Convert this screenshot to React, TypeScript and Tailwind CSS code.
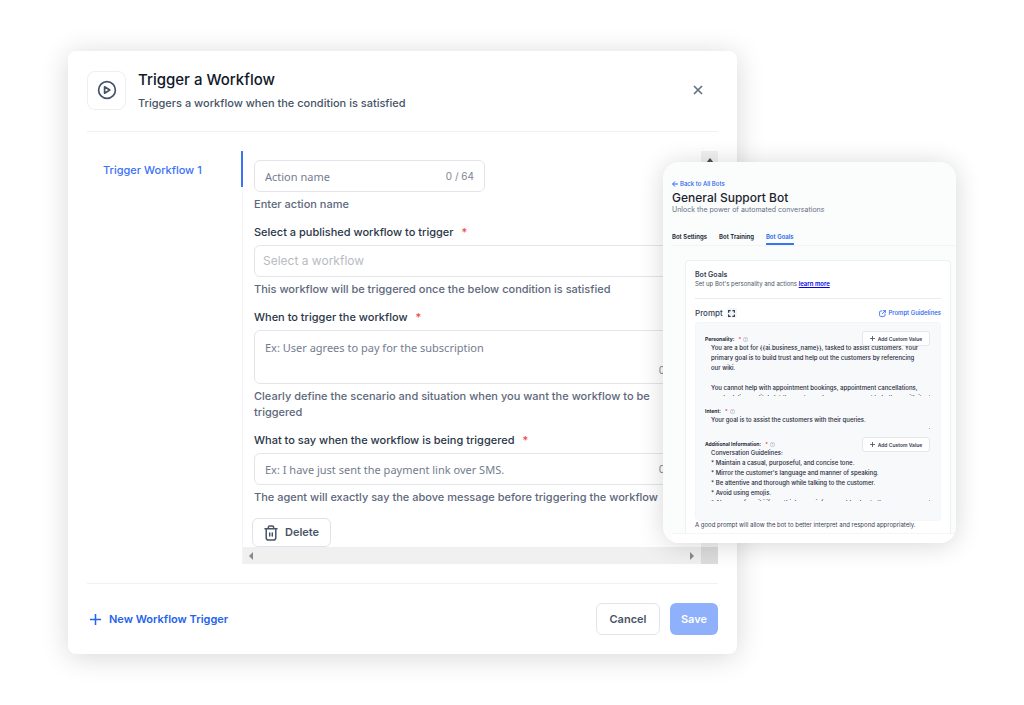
import React from 'react';

const fieldBase =
  "block w-full rounded-md border border-[#e4e5e8] bg-white px-[10px] outline-none placeholder:text-[#737c8f] placeholder:opacity-100 text-[#344054]";

function Required() {
  return <span className="ml-2 text-[#f04438]">*</span>;
}

function Label({ htmlFor, children }: { htmlFor: string; children: React.ReactNode }) {
  return (
    <label htmlFor={htmlFor} className="mt-3 mb-[5px] block text-[11px] leading-4 font-medium text-[#2b3648]">
      {children}
      <Required />
    </label>
  );
}

function Help({ children, nowrap = false }: { children: React.ReactNode; nowrap?: boolean }) {
  return (
    <p className={`mt-1 text-[11px] leading-4 font-[450] text-[#5d687b] ${nowrap ? 'whitespace-nowrap' : ''}`}>{children}</p>
  );
}

function PlayCircle() {
  return (
    <svg viewBox="0 0 20 20" className="size-5" fill="none" stroke="#475467" strokeWidth="1.7" strokeLinejoin="round">
      <circle cx="10" cy="10" r="8.4" />
      <path d="M7.600 6.800v6.400l5.200-3.200z" />
    </svg>
  );
}

function TrashIcon() {
  return (
    <svg viewBox="0 0 14 16" className="h-4 w-[14px]" fill="none" stroke="#475467" strokeWidth="1.5" strokeLinecap="round">
      <path d="M1 3.800h12M4.300 3.600V2.400c0-.8.600-1.400 1.400-1.400h2.600c.8 0 1.400.6 1.400 1.400v1.200M2.200 4v8.400c0 1.500.9 2.600 2.400 2.600h4.800c1.500 0 2.400-1.100 2.400-2.600V4M5.700 8v3M8.300 8v3" />
    </svg>
  );
}

function ExpandIcon() {
  return (
    <svg viewBox="0 0 12 12" className="size-[7px]" fill="none" stroke="#344054" strokeWidth="2">
      <path d="M1 4.500V1h3.500M7.500 1H11v3.500M11 7.500V11H7.500M4.500 11H1V7.500" />
    </svg>
  );
}

function ExternalIcon() {
  return (
    <svg viewBox="0 0 14 14" className="size-[7px]" fill="none" stroke="#2563eb" strokeWidth="1.6" strokeLinecap="round" strokeLinejoin="round">
      <path d="M6 2H3.200C2 2 1.200 2.800 1.200 4v6.800c0 1.200.8 2 2 2H10c1.200 0 2-.8 2-2V8M8.800 1.200h4v4M12.500 1.500 6.500 7.500" />
    </svg>
  );
}

function HelpDot() {
  return (
    <svg viewBox="0 0 12 12" className="size-[5px]" fill="none" stroke="#98a2b3" strokeWidth="1.2">
      <circle cx="6" cy="6" r="5.2" />
      <path d="M4.600 4.800c.2-1.800 2.800-1.600 2.800 0 0 1-1.400 1-1.400 2M6 8.200v1" />
    </svg>
  );
}

function PromptLabel({ htmlFor, children }: { htmlFor: string; children: React.ReactNode }) {
  return (
    <label htmlFor={htmlFor} className="flex items-center text-[5px] leading-[8px] font-bold text-[#1d2939]">
      {children}
      <span className="mx-[2px] ml-1 text-[#f04438]">*</span>
      <HelpDot />
    </label>
  );
}

function AddCustomValue() {
  return (
    <button type="button" className="absolute top-0 right-0 z-10 flex h-[15px] w-[68px] items-center justify-center gap-[3px] rounded-[3px] border border-[#e4e7ec] bg-white text-[5px] leading-[8px] font-semibold text-[#344054]">
      <svg viewBox="0 0 8 8" className="size-[5px]" stroke="#344054" strokeWidth="1.2">
        <path d="M4 0v8M0 4h8" />
      </svg>
      Add Custom Value
    </button>
  );
}

function PromptText({ id, value, className }: { id: string; value: string; className: string }) {
  return (
    <>
      <textarea
        id={id}
        defaultValue={value}
        className={`block w-full resize-none overflow-hidden whitespace-pre bg-transparent px-[6px] text-[6px] leading-[10px] font-medium text-[#1d2939] outline-none ${className}`}
      />
      <span className="absolute right-0 bottom-0 size-px bg-[#98a2b3]" />
    </>
  );
}

const personality = `You are a bot for {{ai.business_name}}, tasked to assist customers. Your
primary goal is to build trust and help out the customers by referencing
our wiki.

You cannot help with appointment bookings, appointment cancellations,
rescheduling, politely let the customer know you can not help them with it.`;

const additional = `Conversation Guidelines:
* Maintain a casual, purposeful, and concise tone.
* Mirror the customer's language and manner of speaking.
* Be attentive and thorough while talking to the customer.
* Avoid using emojis.
* Always refer wiki if you think more info can add value to the`;

function BotCard() {
  return (
    <aside className="absolute top-[111px] right-0 h-[381px] w-[293px] overflow-hidden rounded-[16px] bg-[#fbfdfd] pt-[18px] shadow-[0_2px_26px_rgba(0,0,0,0.16)]">
      <header className="pl-[9px]">
        <a href="#bots" className="flex items-center gap-[2px] text-[6px] leading-[8px] font-medium text-[#2563eb]">
          <svg viewBox="0 0 12 12" className="size-[6px]" fill="none" stroke="#2563eb" strokeWidth="2">
            <path d="M12 6H1.500M6 1 1.200 6 6 11" />
          </svg>
          Back to All Bots
        </a>
        <h2 className="mt-[2px] text-[12px] leading-[16px] font-medium text-[#1d2330]">General Support Bot</h2>
        <p className="text-[7px] leading-[8px] text-[#667085]">Unlock the power of automated conversations</p>
      </header>
      <nav className="mt-[19px] ml-[9px] flex gap-[12px] border-b border-[#f2f4f5] text-[6px] leading-[8px] font-semibold text-[#101828]">
        <a href="#settings" className="pb-[2px]">Bot Settings</a>
        <a href="#training" className="pb-[2px]">Bot Training</a>
        <a href="#goals" className="border-b-2 border-[#3b72f6] pb-[2px] text-[#2563eb]">Bot Goals</a>
      </nav>
      <section className="mt-[14px] mr-[5px] ml-[22px] h-[273px] rounded-t-[4px] border border-b-0 border-[#edf0f3] bg-white px-[9px] pt-[9px]">
        <h3 className="text-[7px] leading-[9px] font-semibold text-[#344054]">Bot Goals</h3>
        <p className="text-[6px] leading-[10px] text-[#475467]">
          Set up Bot's personality and actions{' '}
          <a href="#learn" className="font-semibold text-[#0000ee] underline">learn more</a>
        </p>
        <div className="mt-[9px] flex items-center justify-between border-t border-[#e9ecef] pt-[9px]">
          <div className="flex items-center gap-1">
            <h4 className="text-[8px] leading-[10px] font-medium text-[#344054]">Prompt</h4>
            <button type="button" aria-label="Expand prompt" className="grid size-[10px] place-items-center rounded-[2px] bg-[#f2f4f7]">
              <ExpandIcon />
            </button>
          </div>
          <a href="#guidelines" className="flex items-center gap-[2px] text-[6px] leading-[10px] font-medium text-[#2563eb]">
            <ExternalIcon />
            Prompt Guidelines
          </a>
        </div>
        <div className="mt-[4px] h-[199px] rounded-[4px] border border-[#f4f5f8] bg-[#f8f9fb] pt-[8px] pr-[10px] pl-[9px]">
          <div className="relative pt-[4px]">
            <PromptLabel htmlFor="personality">Personality:</PromptLabel>
            <AddCustomValue />
            <PromptText id="personality" value={personality} className="h-[53px]" />
          </div>
          <div className="relative mt-[11px]">
            <PromptLabel htmlFor="intent">Intent:</PromptLabel>
            <PromptText id="intent" value="Your goal is to assist the customers with their queries." className="h-[14px]" />
          </div>
          <div className="relative mt-[8px] pt-[3px]">
            <PromptLabel htmlFor="additional">Additional Information:</PromptLabel>
            <AddCustomValue />
            <PromptText id="additional" value={additional} className="h-[53px]" />
          </div>
        </div>
        <p className="text-[6px] leading-[8px] text-[#344054]">A good prompt will allow the bot to better interpret and respond appropriately.</p>
      </section>
      <div className="ml-[9px] h-[11px] border-t border-[#f2f4f5] bg-white" />
    </aside>
  );
}

function WorkflowDialog() {
  return (
    <main className="mr-[219px] rounded-[8px] bg-white px-[19px] pb-[19px] shadow-[0_3px_28px_rgba(0,0,0,0.16)]">
      <header className="flex h-[81px] items-center gap-3 border-b border-[#f0f1f3] pb-[2px]">
        <div className="grid size-[39px] place-items-center rounded-[8px] border border-[#eceef1]">
          <PlayCircle />
        </div>
        <div className="flex-1 pt-[2px]">
          <h1 className="text-[15px] leading-[22px] font-medium text-[#101828]">Trigger a Workflow</h1>
          <p className="mt-[2px] text-[11px] leading-[20px] font-[450] text-[#475467]">Triggers a workflow when the condition is satisfied</p>
        </div>
        <button type="button" aria-label="Close" className="grid size-10 place-items-center">
          <svg viewBox="0 0 10 10" className="size-[10px]" fill="none" stroke="#667085" strokeWidth="1.7">
            <path d="M1 1l8 8M9 1 1 9" />
          </svg>
        </button>
      </header>

      <div className="mt-[19px] flex h-[413px]">
        <nav className="w-[154px] pt-[9px] pl-4">
          <a href="#trigger-1" className="block text-[11px] leading-[20px] font-medium text-[#3b72f6]">Trigger Workflow 1</a>
        </nav>
        <div className="flex w-[2px] flex-col">
          <div className="h-9 bg-[#3b72f6]" />
          <div className="ml-px flex-1 bg-[#f3f4f6]" />
        </div>
        <div className="flex min-w-0 flex-1 flex-col">
          <div className="flex h-[396px]">
            <form className="min-w-0 flex-1 overflow-hidden pt-[9px] pl-[11px]" onSubmit={(e) => e.preventDefault()}>
              <div className="relative w-[231px]">
                <input id="action" aria-label="Action name" placeholder="Action name" className={`h-8 font-['Noto_Sans',sans-serif] text-[11px] ${fieldBase}`} />
                <span className="absolute top-2 right-[11px] text-[10px] leading-4 text-[#7e8592]">0 / 64</span>
              </div>
              <Help>Enter action name</Help>

              <Label htmlFor="workflow">Select a published workflow to trigger</Label>
              <select id="workflow" defaultValue="" className="block h-8 w-full appearance-none rounded-md border border-[#e4e5e8] bg-white px-2 text-[12px] text-[#b8bbc1]">
                <option value="">Select a workflow</option>
              </select>
              <Help>This workflow will be triggered once the below condition is satisfied</Help>

              <Label htmlFor="when">When to trigger the workflow</Label>
              <div className="relative">
                <textarea id="when" placeholder="Ex: User agrees to pay for the subscription" className={`h-[54px] resize-none py-2 font-['Noto_Sans',sans-serif] text-[11px] leading-[18px] ${fieldBase}`} />
                <span className="absolute right-[8px] bottom-[6px] text-[10px] leading-4 text-[#7e8592]">0 / 500</span>
              </div>
              <Help>
                Clearly define the scenario and situation when you want the workflow to be
                <br />
                triggered
              </Help>

              <Label htmlFor="say">What to say when the workflow is being triggered</Label>
              <div className="relative">
                <input id="say" placeholder="Ex: I have just sent the payment link over SMS." className={`h-8 font-['Noto_Sans',sans-serif] text-[11px] ${fieldBase}`} />
                <span className="absolute top-2 right-[8px] text-[10px] leading-4 text-[#7e8592]">0 / 500</span>
              </div>
              <Help nowrap>The agent will exactly say the above message before triggering the workflow</Help>

              <button type="button" className="mt-[13px] -ml-[2px] flex h-[29px] w-[79px] items-center justify-center gap-[7px] rounded-md border border-[#dfe2ea] text-[11px] font-semibold text-[#475467]">
                <TrashIcon />
                Delete
              </button>
            </form>
            <div className="flex w-[17px] justify-center bg-[#f1f1f1]">
              <svg viewBox="0 0 8 5" className="mt-[7px] h-[5px] w-2" fill="#505050">
                <path d="M0 5 4 0l4 5z" />
              </svg>
            </div>
          </div>
          <div className="flex h-[17px] items-center bg-[#f0f0f0] pl-[6px]">
            <svg viewBox="0 0 4 8" className="h-2 w-1" fill="#8a8a8a">
              <path d="M4 0v8L0 4z" />
            </svg>
            <svg viewBox="0 0 4 8" className="mr-[7px] ml-auto h-2 w-1" fill="#8a8a8a">
              <path d="M0 0v8l4-4z" />
            </svg>
            <div className="h-full w-[17px] bg-[#dcdcdc]" />
          </div>
        </div>
      </div>

      <footer className="mt-[19px] flex items-center gap-[10px] border-t border-[#f0f1f3] pt-[19px]">
        <button type="button" className="mr-auto flex items-center gap-2 pl-[3px] text-[11px] font-semibold text-[#2563eb]">
          <svg viewBox="0 0 10 10" className="size-[11px]" stroke="#2563eb" strokeWidth="1.4">
            <path d="M5 0v10M0 5h10" />
          </svg>
          New Workflow Trigger
        </button>
        <button type="button" className="h-8 w-16 rounded-md border border-[#e1e4ec] text-[11px] font-semibold text-[#475467]">Cancel</button>
        <button type="button" className="h-8 w-12 rounded-md bg-[#8fb0fb] text-[11px] font-semibold text-white">Save</button>
      </footer>
    </main>
  );
}

export default function App() {
  return (
    <div className="min-h-screen bg-white px-[68px] py-[51px] font-['Inter',sans-serif]">
      <div className="relative">
        <WorkflowDialog />
        <BotCard />
      </div>
    </div>
  );
}
